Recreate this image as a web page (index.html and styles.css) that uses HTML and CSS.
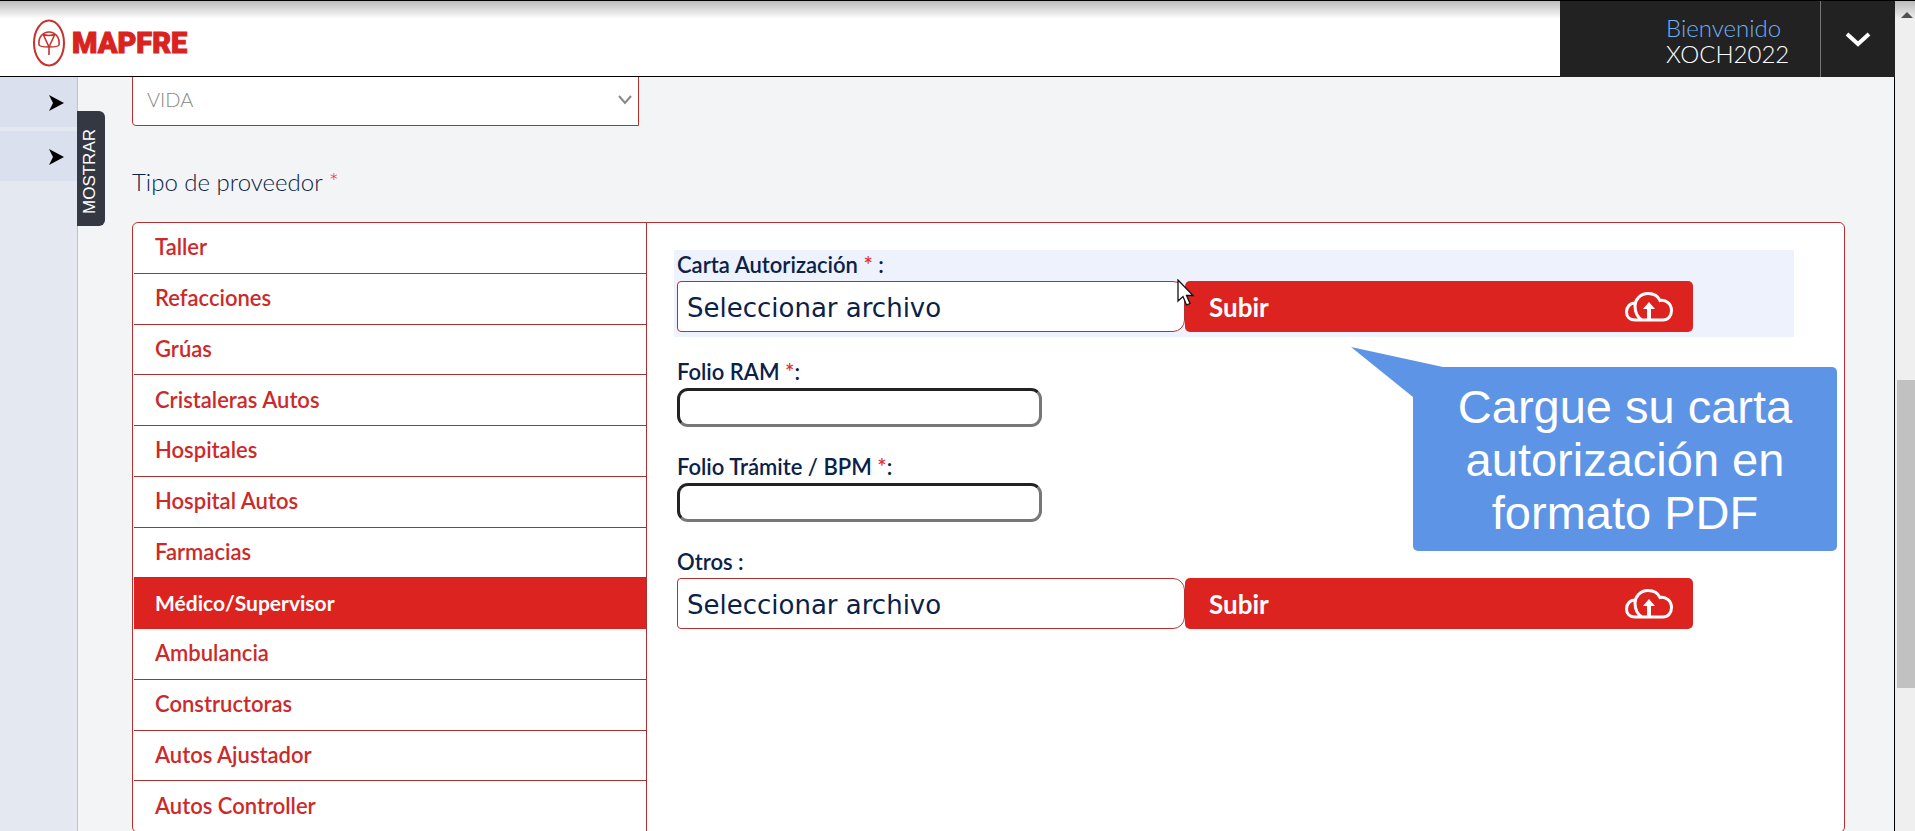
FILE: index.html
```html
<!DOCTYPE html>
<html lang="es">
<head>
  <meta charset="UTF-8">
  <meta name="viewport" content="width=device-width, initial-scale=1">
  <title>MAPFRE - Proveedores</title>
  <link rel="stylesheet" href="styles.css">
</head>
<body>

  <div class="app">
    <header class="topbar">
      <a href="/" class="logo">
        <svg class="logo-mark" viewBox="0 0 34 48" fill="none" stroke="#c8322d" stroke-width="2">
          <ellipse cx="17" cy="24" rx="15" ry="22.5"/>
          <path d="M17 36V28M7 26C6 18 11 13 17 13C23 13 28 18 27 26C26 28 19 28 17 28C15 28 8 28 7 26ZM17 28L11 15M17 28L23 15M11 15C14 17 20 17 23 15" stroke-width="1.600"/>
        </svg>
        <span class="logo-text">MAPFRE</span>
      </a>
      <div class="user">
        <div class="user-name">
          <span class="user-hello">Bienvenido</span>
          <span>XOCH2022</span>
        </div>
        <button type="button" class="user-toggle" aria-label="Menú de usuario">
          <svg width="26" height="16" viewBox="0 0 26 16" fill="none" stroke="#fff" stroke-width="4"><path d="M2 2L13 12L24 2"/></svg>
        </button>
      </div>
    </header>

    <div class="body">
      <nav class="sidebar">
        <button type="button" class="side-item" aria-label="Abrir menú">
          <svg width="15" height="16" viewBox="0 0 15 16"><path d="M0 0L15 8L0 16L4 8Z"/></svg>
        </button>
        <button type="button" class="side-item" aria-label="Abrir menú">
          <svg width="15" height="16" viewBox="0 0 15 16"><path d="M0 0L15 8L0 16L4 8Z"/></svg>
        </button>
      </nav>
      <button type="button" class="show-tab">MOSTRAR</button>

      <main class="content">
        <div class="select-box">
          <select class="select" aria-label="Ramo">
            <option>VIDA</option>
          </select>
          <svg class="select-arrow" width="14" height="10" viewBox="0 0 14 10" fill="none" stroke="#888" stroke-width="2"><path d="M1 1L7 8L13 1"/></svg>
        </div>

        <h2 class="title">Tipo de proveedor <span class="req">*</span></h2>

        <section class="card">
          <ul class="types">
            <li><a href="#taller">Taller</a></li>
            <li><a href="#refacciones">Refacciones</a></li>
            <li><a href="#gruas">Grúas</a></li>
            <li><a href="#cristaleras">Cristaleras Autos</a></li>
            <li><a href="#hospitales">Hospitales</a></li>
            <li><a href="#hospital-autos">Hospital Autos</a></li>
            <li><a href="#farmacias">Farmacias</a></li>
            <li><a href="#medico" class="active">Médico/Supervisor</a></li>
            <li><a href="#ambulancia">Ambulancia</a></li>
            <li><a href="#constructoras">Constructoras</a></li>
            <li><a href="#ajustador">Autos Ajustador</a></li>
            <li><a href="#controller">Autos Controller</a></li>
          </ul>

          <form class="form">
            <div class="field highlight">
              <label for="carta">Carta Autorización <span class="req">*</span> :</label>
              <div class="file-row">
                <label class="file-box">Seleccionar archivo
                  <input type="file" id="carta" class="file-input">
                </label>
                <button type="button" class="upload-btn">Subir
                  <svg width="48" height="30" viewBox="0 0 48 30" fill="none" stroke="#fff" stroke-width="3"><path d="M10 28H38C43 28 46.500 24 46.500 18.500C46.500 12 41 7.500 35 8.500C33 4 28.500 1.500 23 1.500C15 1.500 10 8 10 14C10 20 12 25 17 28M10 11C5 11 1.500 15 1.500 20C1.500 25 5 28 10 28"/><path d="M24 27V15" stroke-width="4"/><path d="M18 17L24 10L30 17Z" fill="#fff" stroke="none"/></svg>
                </button>
              </div>
            </div>

            <div class="field">
              <label for="ram">Folio RAM <span class="req">*</span>:</label>
              <input type="text" id="ram" class="text-input">
            </div>

            <div class="field">
              <label for="bpm">Folio Trámite / BPM <span class="req">*</span>:</label>
              <input type="text" id="bpm" class="text-input">
            </div>

            <div class="field">
              <label for="otros">Otros :</label>
              <div class="file-row">
                <label class="file-box">Seleccionar archivo
                  <input type="file" id="otros" class="file-input">
                </label>
                <button type="button" class="upload-btn">Subir
                  <svg width="48" height="30" viewBox="0 0 48 30" fill="none" stroke="#fff" stroke-width="3"><path d="M10 28H38C43 28 46.500 24 46.500 18.500C46.500 12 41 7.500 35 8.500C33 4 28.500 1.500 23 1.500C15 1.500 10 8 10 14C10 20 12 25 17 28M10 11C5 11 1.500 15 1.500 20C1.500 25 5 28 10 28"/><path d="M24 27V15" stroke-width="4"/><path d="M18 17L24 10L30 17Z" fill="#fff" stroke="none"/></svg>
                </button>
              </div>
            </div>
          </form>

          <!-- Ayuda sobre el formulario -->
          <div class="callout">
            <svg class="callout-tail" width="92" height="50" viewBox="0 0 92 50"><path d="M0 0L92 20V50H62Z" fill="#5d94e6"/></svg>
            <p>Cargue su carta autorización en formato PDF</p>
          </div>
          <svg class="pointer" width="18" height="28" viewBox="0 0 18 28" fill="#fff" stroke="#111" stroke-width="1.300"><path d="M1 1V22L6 17.500L9.500 26L13 24.500L9.500 16.500H16Z"/></svg>
        </section>
      </main>
    </div>
  </div>

  <div class="scrollbar">
    <svg class="scroll-up" width="12" height="6" viewBox="0 0 12 6"><path d="M6 0L12 6H0Z" fill="#505050"/></svg>
    <div class="scroll-thumb"></div>
  </div>

</body>
</html>
```

FILE: styles.css
```css
/* Style global */
* {
  box-sizing: border-box;
}
body {
  margin: 0;
  height: 100vh;
  display: flex;
  overflow: hidden;
  border-top: 1px solid #000;
  font-family: Lato, sans-serif;
  background: #f2f4f6;
  color: #0b2148;
}
button,
select,
input {
  font-family: inherit;
}
.app {
  flex: 1;
  display: flex;
  flex-direction: column;
  min-width: 0;
}
/* Barra superior */
.topbar {
  position: relative;
  z-index: 2;
  display: flex;
  justify-content: space-between;
  background: linear-gradient(#bbb, #fff 18px);
  border-bottom: 1px solid #000;
}
.logo {
  display: flex;
  align-items: center;
  gap: 6px;
  padding: 10px 0 2px 32px;
  text-decoration: none;
}
.logo-mark {
  width: 34px;
  height: 48px;
}
.logo-text {
  font-family: Roboto, "Liberation Sans", sans-serif;
  font-size: 29px;
  font-weight: 900;
  line-height: 48px;
  color: #d9231f;
  -webkit-text-stroke: 1px #d9231f;
}
.user {
  display: flex;
  height: 76px;
  margin-bottom: -1px;
  background: #222;
  color: #fff;
}
.user-name {
  display: flex;
  flex-direction: column;
  justify-content: center;
  width: 260px;
  padding: 4px 0 0 106px;
  font-size: 24px;
  font-weight: 300;
  line-height: 26px;
}
.user-hello {
  color: #6fb0f5;
}
.user-toggle {
  width: 75px;
  padding: 4px 0 0;
  background: none;
  border: none;
  border-left: 1px solid #777;
  cursor: pointer;
}
/* Menú lateral */
.body {
  flex: 1;
  display: flex;
  align-items: flex-start;
  min-height: 0;
  border-right: 1px solid #000;
}
.sidebar {
  align-self: stretch;
  display: flex;
  flex-direction: column;
  gap: 4px;
  width: 78px;
  background: #e4e8f1;
  border-right: 1px solid #c0c2c6;
}
.side-item {
  display: flex;
  align-items: center;
  justify-content: flex-end;
  height: 50px;
  padding: 2px 13px 0;
  background: #dae0ed;
  border: none;
}
.show-tab {
  width: 28px;
  height: 115px;
  margin: 34px 0 0 -1px;
  padding: 0 0 6px 3px;
  border: none;
  border-radius: 6px 0 0 6px;
  background: #343843;
  color: #fff;
  font-family: "Liberation Sans", sans-serif;
  font-size: 17px;
  writing-mode: vertical-rl;
  transform: rotate(180deg);
  cursor: pointer;
}
/* Contenido principal */
.content {
  flex: 1;
  min-width: 0;
  padding: 0 49px 0 27px;
}
.select-box {
  position: relative;
  width: 507px;
  margin-top: -3px;
}
.select {
  display: block;
  width: 100%;
  height: 52px;
  padding: 0 14px 2px;
  appearance: none;
  background: #fff;
  border: 1px solid #b92f2f;
  border-radius: 4px 0 0 4px;
  color: #888;
  font-size: 20px;
  font-weight: 300;
}
.select-arrow {
  position: absolute;
  right: 7px;
  top: 21px;
  pointer-events: none;
}
.title {
  margin: 40px 0 24px;
  font-size: 24px;
  font-weight: 300;
  line-height: 32px;
}
.req {
  color: #e0312e;
}
.card {
  position: relative;
  display: flex;
  padding-left: 1px;
  background: #fff;
  border: 1px solid #b92f2f;
  border-radius: 6px;
}
/* Lista de tipos */
.types {
  display: grid;
  grid-auto-rows: 1fr;
  flex: 0 0 30%;
  min-height: 609px;
  margin: 0;
  padding: 0;
  list-style: none;
  border-right: 1px solid #a83232;
}
.types a {
  display: flex;
  align-items: center;
  height: 100%;
  padding: 0 21px 2px;
  border-bottom: 1px solid #a83232;
  color: #cc2a2a;
  font-size: 22px;
  font-weight: 600;
  text-decoration: none;
}
.types a.active {
  background: #dd231f;
  border-color: #dd231f;
  color: #fff;
  font-size: 21px;
  font-weight: bold;
}
/* Formulario */
.form {
  flex: 1;
  display: flex;
  flex-direction: column;
  gap: 20px;
  padding: 27px 50px 0 27px;
}
.field {
  padding: 2px 3px 5px;
}
.field > label {
  display: block;
  margin-bottom: 3px;
  font-size: 22px;
  font-weight: 600;
  line-height: 26px;
}
.highlight {
  background: #edf2fd;
}
.file-row {
  display: flex;
  max-width: 1016px;
}
.file-box,
.upload-btn {
  display: flex;
  align-items: center;
  height: 51px;
}
.file-box {
  position: relative;
  flex: 1;
  padding: 2px 9px 0;
  background: #fff;
  border: 1px solid #b92f2f;
  border-radius: 4px 12px 12px 4px;
  font-family: "DejaVu Sans", sans-serif;
  font-size: 26px;
}
.file-input {
  position: absolute;
  inset: 0;
  width: 100%;
  opacity: 0;
  cursor: pointer;
}
.upload-btn {
  width: 50%;
  justify-content: space-between;
  padding: 0 20px 0 24px;
  background: #dd231f;
  border: none;
  border-radius: 5px;
  color: #fff;
  font-size: 26px;
  font-weight: bold;
  cursor: pointer;
}
.text-input {
  display: block;
  width: 100%;
  max-width: 365px;
  height: 39px;
  padding: 0 10px;
  background: #fff;
  border: 3px solid;
  border-color: #222 #777 #777 #222;
  border-radius: 11px;
  font-size: 21px;
}
/* Ayuda */
.callout {
  position: absolute;
  top: 144px;
  right: 7px;
  width: 424px;
  padding: 13px 40px 12px;
  background: #5d94e6;
  border-radius: 5px;
  color: #fff;
  font-family: "Liberation Sans", sans-serif;
  font-size: 47px;
  line-height: 53px;
  text-align: center;
}
.callout p {
  margin: 0;
}
.callout-tail {
  position: absolute;
  top: -20px;
  left: -62px;
}
.pointer {
  position: absolute;
  top: 56px;
  left: 1044px;
}
/* Barra de desplazamiento */
.scrollbar {
  width: 20px;
  padding: 11px 0 0 2px;
  background: linear-gradient(#bbb, #efefef 18px);
}
.scroll-up {
  display: block;
  margin-left: 4px;
}
.scroll-thumb {
  height: 308px;
  margin-top: 362px;
  background: #c1c1c1;
}
```
